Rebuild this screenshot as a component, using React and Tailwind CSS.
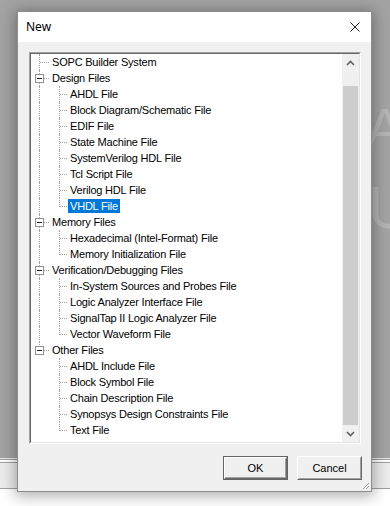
import React from "react";

const tree = [
  { label: "SOPC Builder System" },
  {
    label: "Design Files",
    children: [
      "AHDL File",
      "Block Diagram/Schematic File",
      "EDIF File",
      "State Machine File",
      "SystemVerilog HDL File",
      "Tcl Script File",
      "Verilog HDL File",
      "VHDL File",
    ],
  },
  {
    label: "Memory Files",
    children: ["Hexadecimal (Intel-Format) File", "Memory Initialization File"],
  },
  {
    label: "Verification/Debugging Files",
    children: [
      "In-System Sources and Probes File",
      "Logic Analyzer Interface File",
      "SignalTap II Logic Analyzer File",
      "Vector Waveform File",
    ],
  },
  {
    label: "Other Files",
    children: [
      "AHDL Include File",
      "Block Symbol File",
      "Chain Description File",
      "Synopsys Design Constraints File",
      "Text File",
    ],
  },
];

// flatten the tree into rows with what each row needs to draw its lines
const rows = [];
tree.forEach((node, i) => {
  const lastRoot = i === tree.length - 1;
  rows.push({ label: node.label, level: 0, group: !!node.children, lastRoot });
  (node.children || []).forEach((child, j) => {
    rows.push({
      label: child,
      level: 1,
      lastRoot,
      lastChild: j === node.children.length - 1,
    });
  });
});

const selected = "VHDL File";

const RootCol = ({ row }) => (
  <div className="relative w-[19px] h-4 shrink-0">
    {row.level === 0 && (
      <div
        className={`absolute left-[8px] top-0 w-0 border-l border-dotted border-[#a0a0a0] ${
          row.lastRoot ? "h-[9px]" : "h-4"
        }`}
      />
    )}
    {row.level === 1 && !row.lastRoot && (
      <div className="absolute left-[8px] top-0 h-4 w-0 border-l border-dotted border-[#a0a0a0]" />
    )}
    {row.level === 0 && (
      <div className="absolute left-[9px] top-[8px] w-[9px] h-0 border-t border-dotted border-[#a0a0a0]" />
    )}
    {row.group && (
      <div className="absolute left-[4px] top-[4px] w-[9px] h-[9px] border border-[#919191] bg-white flex items-center justify-center">
        <div className="w-[5px] h-px bg-[#1a1a1a]" />
      </div>
    )}
  </div>
);

const ChildCol = ({ row }) => (
  <div className="relative w-[18px] h-4 shrink-0">
    <div
      className={`absolute left-[9px] top-0 w-0 border-l border-dotted border-[#a0a0a0] ${
        row.lastChild ? "h-[9px]" : "h-4"
      }`}
    />
    <div className="absolute left-[10px] top-[8px] w-[7px] h-0 border-t border-dotted border-[#a0a0a0]" />
  </div>
);

const Chevron = ({ down }) => (
  <svg width="9" height="6" viewBox="0 0 9 6">
    <polyline
      points={down ? "1,1 4.5,4.5 8,1" : "1,5 4.5,1.5 8,5"}
      fill="none"
      stroke="#606060"
      strokeWidth="1.6"
    />
  </svg>
);

const Button = ({ children, isDefault }) => (
  <button
    className={`w-[65px] h-[24px] bg-[#f0f0f0] text-[11px] text-black ${
      isDefault ? "border border-[#646464]" : ""
    }`}
  >
    <div className="w-full h-full border border-t-white border-l-white border-b-[#696969] border-r-[#696969]">
      <div className="w-full h-full flex items-center justify-center border border-t-[#f0f0f0] border-l-[#f0f0f0] border-b-[#a0a0a0] border-r-[#a0a0a0]">
        {children}
      </div>
    </div>
  </button>
);

export default function App() {
  return (
    <div className="relative w-[390px] h-[506px] overflow-hidden bg-white font-['Liberation_Sans',Arial,sans-serif]">
      {/* background window */}
      <div className="relative h-[458px] bg-[#a3a3a3] overflow-hidden">
        <span className="absolute left-[366px] top-[100px] text-[56px] leading-none text-[#b4b4b4]">
          A
        </span>
        <span className="absolute left-[368px] top-[178px] text-[60px] leading-none text-[#b4b4b4]">
          U
        </span>
      </div>
      <div className="h-px bg-[#e8e8e8]" />
      <div className="h-px bg-[#a0a0a0]" />
      <div className="h-[2px] bg-white" />
      <div className="h-px bg-[#a0a0a0]" />
      <div className="h-[25px] bg-[#ececec]" />
      <div className="h-px bg-[#a0a0a0]" />

      {/* dialog */}
      <div className="absolute left-[17px] top-[11px] w-[355px] h-[481px] flex flex-col border border-[#8c8c8c] bg-[#f0f0f0] shadow-[0_2px_14px_2px_rgba(0,0,0,0.32)]">
        <div className="h-[30px] bg-white flex items-center justify-between pl-[8px] pr-[11px] shrink-0">
          <span className="text-[12px] text-black font-['Noto_Sans',sans-serif]">New</span>
          <svg width="10" height="10" viewBox="0 0 10 10">
            <path d="M0.5 0.5 L9.5 9.5 M9.5 0.5 L0.5 9.5" stroke="#222" strokeWidth="1" />
          </svg>
        </div>

        <div className="flex-1 flex flex-col pl-[11px] pr-[9px] pt-[10px]">
          <div className="w-[332px] h-[392px] border border-t-[#a0a0a0] border-l-[#a0a0a0] border-b-white border-r-white">
            <div className="w-full h-full flex border border-t-[#696969] border-l-[#696969] border-b-[#e3e3e3] border-r-[#e3e3e3]">
              <div className="flex-1 bg-white overflow-hidden">
                {rows.map((row) => (
                  <div key={row.label} className="flex h-4 items-center">
                    <RootCol row={row} />
                    {row.level === 1 && <ChildCol row={row} />}
                    <span
                      className={`h-[14px] px-[2px] flex items-center text-[11px] tracking-[-0.2px] whitespace-nowrap ${
                        row.label === selected ? "bg-[#0078d7] text-white" : "text-black"
                      }`}
                    >
                      {row.label}
                    </span>
                  </div>
                ))}
              </div>
              <div className="w-[17px] bg-[#f0f0f0] flex flex-col">
                <div className="h-[17px] flex items-center justify-center">
                  <Chevron />
                </div>
                <div className="h-[15px]" />
                <div className="flex-1 mx-px bg-[#cdcdcd]" />
                <div className="h-[17px] flex items-center justify-center">
                  <Chevron down />
                </div>
              </div>
            </div>
          </div>

          <div className="mt-[12px] flex justify-end gap-[9px]">
            <Button isDefault>OK</Button>
            <Button>Cancel</Button>
          </div>
        </div>

        {/* resize grip */}
        <svg className="absolute right-[1px] bottom-[1px]" width="8" height="8" viewBox="0 0 8 8">
          <path d="M7 1 L1 7 M7 4 L4 7" stroke="#a0a0a0" strokeWidth="1" />
        </svg>
      </div>
    </div>
  );
}
